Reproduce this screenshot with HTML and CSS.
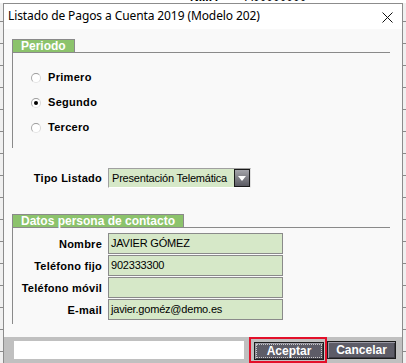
FILE: index.html
```html
<!DOCTYPE html>
<html lang="es">
<head>
<meta charset="utf-8">
<title>Listado de Pagos a Cuenta 2019</title>
<link rel="stylesheet" href="styles.css">
</head>
<body>
<div class="desktop">
  <div class="bgapp"><span class="nif">N.I.F.</span><span class="nifv">A00000000</span></div>
  <div class="window">
    <div class="titlebar">
      <span class="title">Listado de Pagos a Cuenta 2019 (Modelo 202)</span>
      <svg class="close" width="11" height="11" viewBox="0 0 11 11"><path d="M0.5 0.5 L10.5 10.5 M10.5 0.5 L0.5 10.5" stroke="#111" stroke-width="1" fill="none"/></svg>
    </div>
    <div class="client">
      <div class="group">
        <div class="ghead"><span class="tab">Periodo</span></div>
        <div class="gbody radios">
          <div class="radio"><span class="circle"></span><span>Primero</span></div>
          <div class="radio"><span class="circle checked"></span><span>Segundo</span></div>
          <div class="radio"><span class="circle"></span><span>Tercero</span></div>
        </div>
      </div>
      <div class="row tipo">
        <span class="lbl">Tipo Listado</span>
        <div class="select"><span class="seltext">Presentación Telemática</span><span class="arrow"></span></div>
      </div>
      <div class="group g2">
        <div class="ghead"><span class="tab">Datos persona de contacto</span></div>
        <div class="gbody fields">
          <div class="row"><span class="lbl">Nombre</span><div class="input">JAVIER GÓMEZ</div></div>
          <div class="row"><span class="lbl">Teléfono fijo</span><div class="input">902333300</div></div>
          <div class="row"><span class="lbl">Teléfono móvil</span><div class="input"></div></div>
          <div class="row"><span class="lbl">E-mail</span><div class="input">javier.goméz@demo.es</div></div>
        </div>
      </div>
    </div>
    <div class="footer">
      <div class="status"></div>
      <div class="ring"><button class="btn focused">Aceptar</button></div>
      <button class="btn cancel">Cancelar</button>
    </div>
  </div>
</div>
</body>
</html>
```
FILE: styles.css
```css
* { box-sizing: border-box; }
html, body { margin: 0; padding: 0; }
body { width: 406px; height: 363px; overflow: hidden; background: #ffffff; }

.desktop {
  position: relative;
  width: 406px;
  height: 363px;
  overflow: hidden;
  background:
    repeating-linear-gradient(to bottom, #f0f0f0 0, #f0f0f0 21px, #8a8a8a 21px, #8a8a8a 22px);
}

.bgapp {
  height: 3px;
  overflow: hidden;
  background: #ffffff;
  font-family: "Liberation Sans", Arial, sans-serif;
  font-weight: bold;
  font-size: 12px;
  line-height: 12px;
  position: relative;
}
.bgapp span { position: absolute; top: -9px; }
.bgapp .nif { left: 190px; }
.bgapp .nifv { left: 245px; font-weight: normal; }

.window {
  position: absolute;
  left: 3px;
  top: 3px;
  width: 400px;
  height: 362px;
  border: 1px solid #8c8c8c;
  border-bottom: none;
  background: #f9f9f9;
  display: flex;
  flex-direction: column;
}

.titlebar {
  height: 25px;
  flex: none;
  background: #ffffff;
  display: flex;
  align-items: center;
  padding-left: 4px;
  position: relative;
}
.title {
  font-family: "Noto Sans", "Open Sans", sans-serif;
  font-size: 12px;
  letter-spacing: -0.1px;
  color: #000;
  position: relative;
  top: -1px;
}
.close { position: absolute; left: 378px; top: 8px; }

.client {
  height: 308px;
  flex: none;
  padding: 10px 0 0 8px;
  font-family: "Liberation Sans", Arial, sans-serif;
}

.group { width: 378px; }
.ghead {
  display: flex;
  align-items: flex-end;
  border-bottom: 1px solid #8a8a8a;
}
.tab {
  height: 13px;
  background: #8cc36c;
  border: 1px solid #8a8a8a;
  border-bottom: none;
  color: #ffffff;
  font-weight: bold;
  font-size: 12px;
  line-height: 12px;
  padding: 0 8px;
  white-space: nowrap;
}
.gbody { border-left: 1px solid #8a8a8a; }

.radios { padding: 11px 0 9px 18px; }
.radio {
  height: 25px;
  display: flex;
  align-items: center;
  font-weight: bold;
  font-size: 11px;
  letter-spacing: 0.3px;
  color: #000;
}
.circle {
  width: 10px;
  height: 10px;
  border-radius: 50%;
  border: 1px solid;
  border-color: #9c9c9c #d8d8d8 #e4e4e4 #a8a8a8;
  background: #ffffff;
  margin-right: 7px;
  position: relative;
  top: 1px;
}
.circle.checked::after {
  content: "";
  position: absolute;
  left: 2px;
  top: 2px;
  width: 4px;
  height: 4px;
  border-radius: 50%;
  background: #000;
}

.row {
  display: flex;
  align-items: center;
  gap: 6px;
}
.lbl {
  width: 90px;
  text-align: right;
  font-weight: bold;
  font-size: 11px;
  letter-spacing: 0.25px;
  color: #000;
  white-space: nowrap;
}
.tipo { margin-top: 20px; height: 20px; }
.select {
  width: 143px;
  height: 20px;
  border: 1px solid #a0a0a0;
  border-bottom-color: #ffffff;
  border-right-color: #e0e0e0;
  background: #d6e8c8;
  display: flex;
  align-items: center;
  padding-left: 3px;
  font-size: 11px;
  letter-spacing: -0.2px;
  color: #000;
}
.seltext { flex: 1; white-space: nowrap; }
.arrow {
  width: 16px;
  height: 18px;
  border: 1px solid #1a1a1a;
  background: linear-gradient(to bottom, #a4a4aa, #5a5a62);
  position: relative;
}
.arrow::after {
  content: "";
  position: absolute;
  left: 3px;
  top: 6px;
  border-left: 4px solid transparent;
  border-right: 4px solid transparent;
  border-top: 5px solid #ffffff;
}

.g2 { margin-top: 26px; }
.fields { padding: 5px 0 4px 0; display: flex; flex-direction: column; gap: 1px; }
.fields .lbl { width: 89px; }
.input {
  width: 175px;
  height: 21px;
  border: 1px solid #8a8a8a;
  background: #d6e8c8;
  font-size: 11px;
  letter-spacing: -0.2px;
  line-height: 14px;
  padding: 2px 0 0 2px;
  color: #000;
  white-space: nowrap;
}

.footer {
  height: 26px;
  flex: none;
  background: #c0c0c0;
  display: flex;
  align-items: flex-start;
}
.status {
  width: 230px;
  height: 18px;
  margin: 4px 0 0 10px;
  background: #ffffff;
}
.ring {
  margin-left: 5px;
  height: 26px;
  border: 2px solid #e3102a;
  padding: 2px 1px 0 3px;
}
.btn {
  font-family: "Liberation Sans", Arial, sans-serif;
  font-weight: bold;
  font-size: 12px;
  color: #ffffff;
  width: 70px;
  height: 18px;
  padding: 0;
  background: #5d5c67;
  border: 1px solid #1c1c1c;
  box-shadow: inset 1px 1px 0 #9a99a4, inset -1px -1px 0 #3e3d46;
  line-height: 14px;
  position: relative;
}
.btn.focused { outline: 1px dotted #c8c8c8; outline-offset: -3px; }
.cancel { width: 69px; margin-top: 4px; }
```
